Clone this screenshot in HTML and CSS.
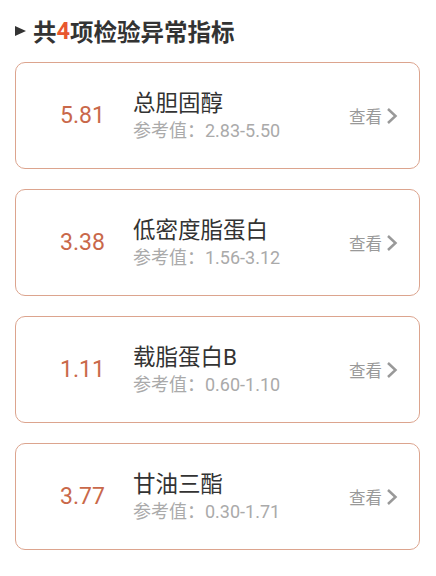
FILE: index.html
```html
<!DOCTYPE html>
<html lang="zh-CN">
<head>
  <meta charset="UTF-8" />
  <meta name="viewport" content="width=device-width, initial-scale=1.0"/>
  <title>检验异常指标</title>
  <link rel="stylesheet" href="styles.css">
</head>
<body>
  <div class="page">
    <h2 class="title"><span class="arrow"></span>共<em>4</em>项检验异常指标</h2>

    <div class="card">
      <div class="value">5.81</div>
      <div class="info">
        <div class="name">总胆固醇</div>
        <div class="ref">参考值：2.83-5.50</div>
      </div>
      <div class="more">查看<svg width="12" height="18" viewBox="0 0 12 18"><path d="M2 2 L9.5 9 L2 16" fill="none" stroke="#999" stroke-width="2.5"/></svg></div>
    </div>

    <div class="card">
      <div class="value">3.38</div>
      <div class="info">
        <div class="name">低密度脂蛋白</div>
        <div class="ref">参考值：1.56-3.12</div>
      </div>
      <div class="more">查看<svg width="12" height="18" viewBox="0 0 12 18"><path d="M2 2 L9.5 9 L2 16" fill="none" stroke="#999" stroke-width="2.5"/></svg></div>
    </div>

    <div class="card">
      <div class="value">1.11</div>
      <div class="info">
        <div class="name">载脂蛋白B</div>
        <div class="ref">参考值：0.60-1.10</div>
      </div>
      <div class="more">查看<svg width="12" height="18" viewBox="0 0 12 18"><path d="M2 2 L9.5 9 L2 16" fill="none" stroke="#999" stroke-width="2.5"/></svg></div>
    </div>

    <div class="card">
      <div class="value">3.77</div>
      <div class="info">
        <div class="name">甘油三酯</div>
        <div class="ref">参考值：0.30-1.71</div>
      </div>
      <div class="more">查看<svg width="12" height="18" viewBox="0 0 12 18"><path d="M2 2 L9.5 9 L2 16" fill="none" stroke="#999" stroke-width="2.5"/></svg></div>
    </div>
  </div>
</body>
</html>
```

FILE: styles.css
```css
body {
  margin: 0;
  background: #fff;
  font-family: Roboto, "Noto Sans CJK SC", sans-serif;
}
.page {
  padding: 0 16px 0 15px;
}
.title {
  display: flex;
  align-items: center;
  margin: 0;
  height: 62px;
  font-size: 23.5px;
  font-weight: bold;
  color: #333;
}
.title em {
  font-style: normal;
  color: #e8572f;
}
.arrow {
  width: 0;
  height: 0;
  margin-right: 7px;
  border-top: 5.5px solid transparent;
  border-bottom: 5.5px solid transparent;
  border-left: 11px solid #333;
}
.card {
  display: flex;
  align-items: center;
  height: 105px;
  margin-bottom: 20px;
  padding: 0 21px 0 16px;
  border: 1px solid #dca48e;
  border-radius: 10px;
}
.value {
  width: 101px;
  text-align: center;
  font-size: 23px;
  color: #c9684a;
}
.info {
  flex: 1;
}
.name {
  font-size: 22.5px;
  color: #333;
  line-height: 29px;
}
.ref {
  margin-top: 1px;
  font-size: 18px;
  color: #aaa;
  line-height: 24px;
}
.more {
  display: flex;
  align-items: center;
  gap: 4px;
  font-size: 16.5px;
  color: #999;
}
```
